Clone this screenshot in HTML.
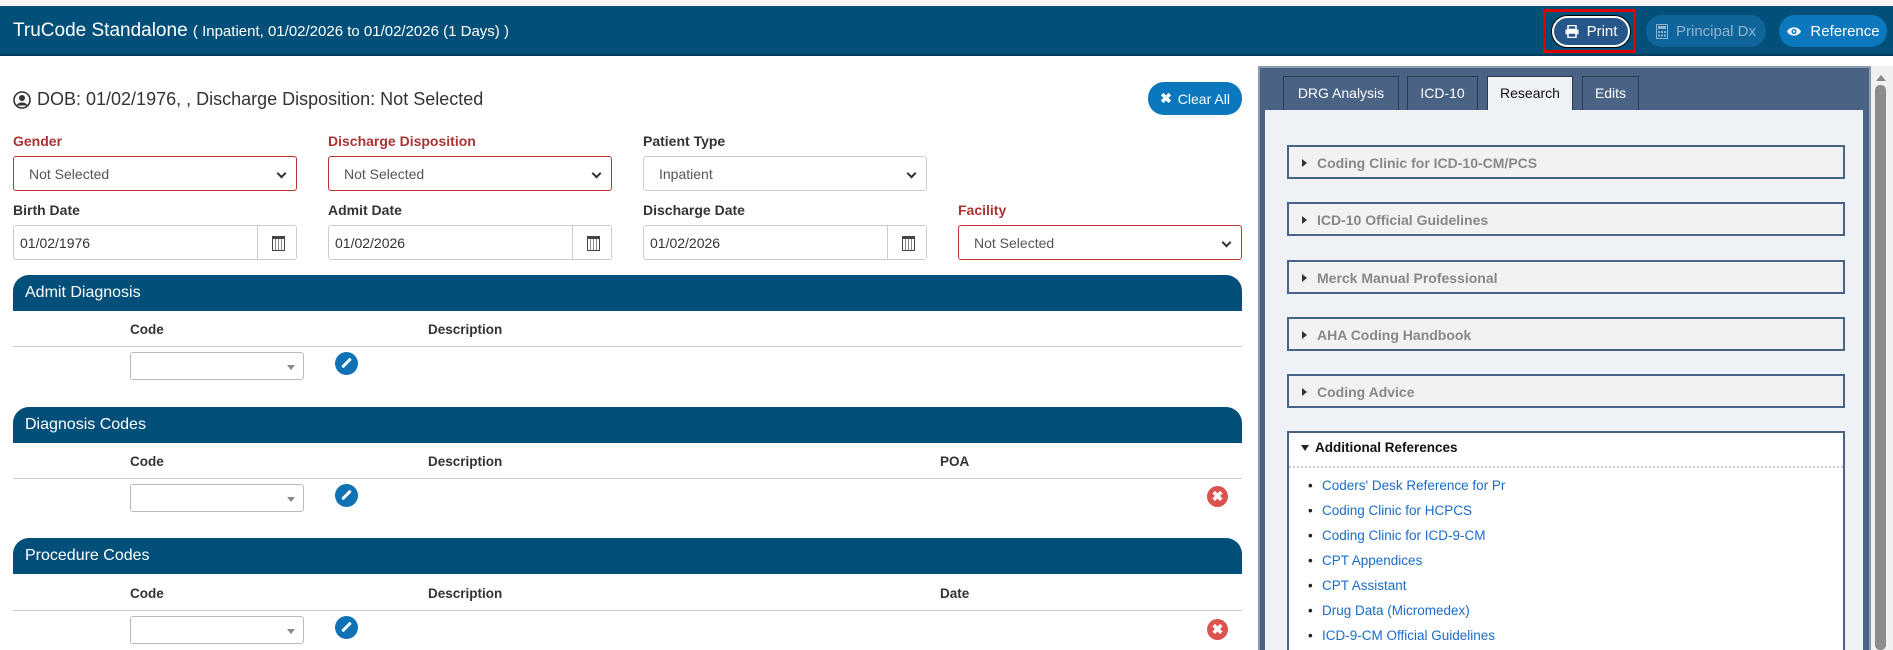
<!DOCTYPE html>
<html style="width:1893px;height:650px;overflow:hidden"><head><meta charset="utf-8"><style>
*{box-sizing:border-box;margin:0;padding:0}
body{width:1893px;height:650px;overflow:hidden;background:#fff;font-family:"Liberation Sans",sans-serif;position:relative;color:#333}
.abs{position:absolute}
.hdr{left:0;top:6px;width:1893px;height:50px;background:#02507a;border-bottom:2px solid #013a5a}
.btn{position:absolute;top:15px;height:32px;border-radius:16px;color:#fff;font-size:15px;display:flex;align-items:center;justify-content:center;gap:8px}
.lbl{position:absolute;font-size:14px;font-weight:bold;color:#333}
.red{color:#a33}
.sel{position:absolute;height:35px;border:1px solid #ccc;border-radius:3px;font-size:14px;color:#555;padding:9px 15px;background:#fff}
.sel.r{border-color:#b33}
.sel:after{content:"";position:absolute;right:11px;top:13px;width:5px;height:5px;border-right:2px solid #333;border-bottom:2px solid #333;transform:rotate(45deg)}
.inp{position:absolute;height:35px;border:1px solid #ccc;border-radius:3px;font-size:14px;color:#333;padding:9px 6px;background:#fff}
.cal{position:absolute;right:0;top:0;width:39px;height:33px;border-left:1px solid #ccc;background:#fff}
.cal:before{content:"";position:absolute;left:14px;top:10px;width:11px;height:11px;border:1px solid #444;border-top:3px solid #444;background:repeating-linear-gradient(90deg,#fff 0 2px,#888 2px 3px)}
.sec{position:absolute;left:13px;width:1229px;height:36px;background:#02507a;border-radius:16px 16px 0 0;color:#fff;font-size:16px;padding:9px 12px}
.ch{position:absolute;font-size:13.5px;font-weight:bold;color:#333}
.line{position:absolute;left:13px;width:1229px;height:1px;background:#ccc}
.ss{position:absolute;left:130px;width:174px;height:28px;border:1px solid #bbb;border-radius:3px;background:#fff}
.ss:after{content:"";position:absolute;right:8px;top:12px;border:4px solid transparent;border-top:5px solid #888}
.pen{position:absolute;width:23px;height:23px;border-radius:50%;background:#0f72b4}
.pen:after{content:"";position:absolute;left:10px;top:5px;width:3px;height:12px;background:#fff;transform:rotate(45deg);border-radius:1px}
.del{position:absolute;width:21px;height:21px;border-radius:50%;background:#d9534f;color:#fff;font-size:14px;font-weight:bold;text-align:center;line-height:21px}
.tab{position:absolute;top:76px;height:34px;background:#4a6385;border:1px solid #2a3a50;border-bottom:none;color:#fff;font-size:14px;text-align:center;line-height:33px}
.acc{position:absolute;left:1287px;width:558px;height:34px;border:2px solid #4a6385;background:#f2f2f2;font-size:14px;font-weight:bold;color:#888;padding:8px 0 0 28px}
.acc:before{content:"";position:absolute;left:13px;top:12px;border:4px solid transparent;border-left:5px solid #333}
.li{position:absolute;left:1322px;font-size:13.5px;color:#1a6cc8}
.li:before{content:"•";position:absolute;left:-14px;color:#222}
</style></head><body>
<div class="abs" style="left:0;top:0;width:1893px;height:6px;background:#fdf5f5"></div>
<div class="abs hdr"></div>
<div class="abs" style="left:13px;top:20px;color:#fff;font-size:19px">TruCode Standalone <span style="font-size:15px">( Inpatient, 01/02/2026 to 01/02/2026 (1 Days) )</span></div>
<div class="abs" style="left:1543px;top:9px;width:93px;height:44px;border:3px solid #e00000"></div>
<div class="btn" style="left:1552px;width:78px;height:31px;top:16px;background:#25578a;border:2px solid #fff;box-shadow:0 0 0 1px #000">
<svg width="14" height="13" viewBox="0 0 14 13"><rect x="3" y="0.5" width="8" height="4" fill="none" stroke="#fff" stroke-width="1.5"/><rect x="0.5" y="4.5" width="13" height="5" rx="1" fill="#fff"/><rect x="3" y="8" width="8" height="4.5" fill="#25578a" stroke="#fff" stroke-width="1.5"/></svg>Print</div>
<div class="btn" style="left:1646px;width:120px;background:#0f6599;color:#8fb4cf">
<svg width="12" height="15" viewBox="0 0 12 15"><rect x="0.5" y="0.5" width="11" height="14" fill="none" stroke="#8fb4cf"/><rect x="2" y="2" width="8" height="3" fill="#8fb4cf"/><g fill="#8fb4cf"><rect x="2" y="7" width="2" height="2"/><rect x="5" y="7" width="2" height="2"/><rect x="8" y="7" width="2" height="2"/><rect x="2" y="10.5" width="2" height="2"/><rect x="5" y="10.5" width="2" height="2"/><rect x="8" y="10.5" width="2" height="2"/></g></svg>Principal Dx</div>
<div class="btn" style="left:1779px;width:108px;background:#0b78bd">
<svg width="16" height="11" viewBox="0 0 16 11"><path d="M1 5.5C4 0 12 0 15 5.5C12 11 4 11 1 5.5Z" fill="#fff"/><circle cx="8" cy="5.5" r="2.6" fill="#0b78bd"/><circle cx="8" cy="5.5" r="1.2" fill="#fff"/></svg>Reference</div>

<div class="abs" style="left:13px;top:89px;font-size:18px;color:#333;display:flex;align-items:center;gap:6px">
<svg width="18" height="18" viewBox="0 0 18 18"><circle cx="9" cy="9" r="8" fill="none" stroke="#333" stroke-width="1.6"/><circle cx="9" cy="7" r="3" fill="#333"/><path d="M3.5 14.5C5 10.5 13 10.5 14.5 14.5" fill="#333"/></svg>DOB: 01/02/1976, , Discharge Disposition: Not Selected</div>
<div class="btn" style="left:1148px;top:82px;height:33px;width:94px;background:#0b78bd;font-size:14px;gap:6px"><span style="font-weight:bold">✖</span>Clear All</div>

<div class="lbl red" style="left:13px;top:133px">Gender</div>
<div class="lbl red" style="left:328px;top:133px">Discharge Disposition</div>
<div class="lbl" style="left:643px;top:133px">Patient Type</div>
<div class="sel r" style="left:13px;top:156px;width:284px">Not Selected</div>
<div class="sel r" style="left:328px;top:156px;width:284px">Not Selected</div>
<div class="sel" style="left:643px;top:156px;width:284px">Inpatient</div>
<div class="lbl" style="left:13px;top:202px">Birth Date</div>
<div class="lbl" style="left:328px;top:202px">Admit Date</div>
<div class="lbl" style="left:643px;top:202px">Discharge Date</div>
<div class="lbl red" style="left:958px;top:202px">Facility</div>
<div class="inp" style="left:13px;top:225px;width:284px">01/02/1976<div class="cal"></div></div>
<div class="inp" style="left:328px;top:225px;width:284px">01/02/2026<div class="cal"></div></div>
<div class="inp" style="left:643px;top:225px;width:284px">01/02/2026<div class="cal"></div></div>
<div class="sel r" style="left:958px;top:225px;width:284px">Not Selected</div>

<div class="sec" style="top:275px">Admit Diagnosis</div>
<div class="ch" style="left:130px;top:322px">Code</div><div class="ch" style="left:428px;top:322px">Description</div>
<div class="line" style="top:346px"></div>
<div class="ss" style="top:352px"></div><div class="pen" style="left:335px;top:352px"></div>

<div class="sec" style="top:407px">Diagnosis Codes</div>
<div class="ch" style="left:130px;top:454px">Code</div><div class="ch" style="left:428px;top:454px">Description</div><div class="ch" style="left:940px;top:454px">POA</div>
<div class="line" style="top:478px"></div>
<div class="ss" style="top:484px"></div><div class="pen" style="left:335px;top:484px"></div><div class="del" style="left:1207px;top:486px">✖</div>

<div class="sec" style="top:538px">Procedure Codes</div>
<div class="ch" style="left:130px;top:586px">Code</div><div class="ch" style="left:428px;top:586px">Description</div><div class="ch" style="left:940px;top:586px">Date</div>
<div class="line" style="top:610px"></div>
<div class="ss" style="top:616px"></div><div class="pen" style="left:335px;top:616px"></div><div class="del" style="left:1207px;top:619px">✖</div>

<div class="abs" style="left:1258px;top:66px;width:613px;height:584px;background:#4a6385;border:2px solid #8a9ab0;border-bottom:none"></div>
<div class="tab" style="left:1283px;width:116px">DRG Analysis</div>
<div class="tab" style="left:1407px;width:71px">ICD-10</div>
<div class="tab" style="left:1487px;width:86px;background:#eef1f5;color:#111">Research</div>
<div class="tab" style="left:1582px;width:57px">Edits</div>
<div class="abs" style="left:1265px;top:110px;width:598px;height:540px;background:#eef1f5"></div>
<div class="acc" style="top:145px">Coding Clinic for ICD-10-CM/PCS</div>
<div class="acc" style="top:202px">ICD-10 Official Guidelines</div>
<div class="acc" style="top:260px">Merck Manual Professional</div>
<div class="acc" style="top:317px">AHA Coding Handbook</div>
<div class="acc" style="top:374px">Coding Advice</div>
<div class="abs" style="left:1287px;top:431px;width:558px;height:219px;border:2px solid #4a6385;border-bottom:none;background:#fff"></div>
<div class="abs" style="left:1301px;top:445px;border:4px solid transparent;border-top:6px solid #222"></div>
<div class="abs" style="left:1315px;top:440px;font-size:13.5px;font-weight:bold;color:#111">Additional References</div>
<div class="abs" style="left:1289px;top:466px;width:554px;border-top:2px dotted #ccc"></div>
<div class="li" style="top:478px">Coders' Desk Reference for Pr</div>
<div class="li" style="top:503px">Coding Clinic for HCPCS</div>
<div class="li" style="top:528px">Coding Clinic for ICD-9-CM</div>
<div class="li" style="top:553px">CPT Appendices</div>
<div class="li" style="top:578px">CPT Assistant</div>
<div class="li" style="top:603px">Drug Data (Micromedex)</div>
<div class="li" style="top:628px">ICD-9-CM Official Guidelines</div>

<div class="abs" style="left:1871px;top:66px;width:22px;height:584px;background:#f0f0f0"></div>
<div class="abs" style="left:1876px;top:70px;border:5px solid transparent;border-bottom:6px solid #888"></div>
<div class="abs" style="left:1875px;top:85px;width:11px;height:565px;background:#8c8c8c;border-radius:5px"></div>
</body></html>
